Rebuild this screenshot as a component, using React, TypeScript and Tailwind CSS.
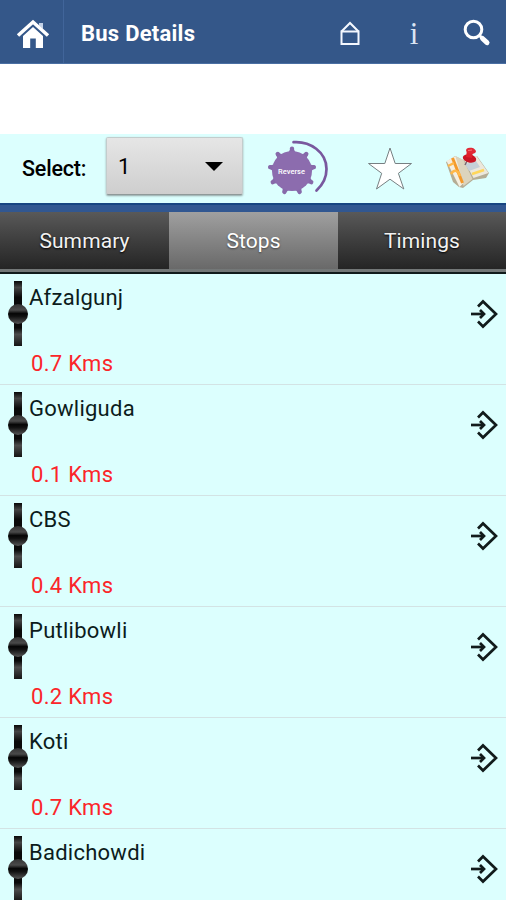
const stops = [
  { name: 'Afzalgunj', distance: '0.7 Kms' },
  { name: 'Gowliguda', distance: '0.1 Kms' },
  { name: 'CBS', distance: '0.4 Kms' },
  { name: 'Putlibowli', distance: '0.2 Kms' },
  { name: 'Koti', distance: '0.7 Kms' },
  { name: 'Badichowdi' },
];

const tabs = ['Summary', 'Stops', 'Timings'];

function HomeIcon() {
  return (
    <svg width="34" height="30" viewBox="0 0 34 30" className="shrink-0">
      <path d="M23 4h4v6l-4-3.500z" fill="#c3d2e8" />
      <path d="M2 16.500 17 3l15 13.500" fill="none" stroke="#fff" strokeWidth="3.500" />
      <path d="M7 17 17 8l10 9v12h-7.200V19.500h-5.600V29H7z" fill="#fff" />
    </svg>
  );
}

function HouseOutlineIcon() {
  return (
    <svg width="22" height="25" viewBox="0 0 22 25" fill="none" stroke="#f4f8ff" strokeWidth="2">
      <path d="M2.500 10.500h17v12.500h-17z" />
      <path d="M2.500 10.500 11 2l8.500 8.500" />
    </svg>
  );
}

function SearchIcon() {
  return (
    <svg width="28" height="28" viewBox="0 0 28 28" fill="none" stroke="#fff">
      <circle cx="10.500" cy="10.500" r="8.300" strokeWidth="3" />
      <path d="m16.500 16.500 3 3" strokeWidth="3" />
      <path d="m19.500 19.500 4.500 4.200" strokeWidth="5" strokeLinecap="round" />
    </svg>
  );
}

function ReverseIcon() {
  const teeth = [0, 40, 80, 120, 160, 200, 240, 280, 320];
  return (
    <svg width="64" height="60" viewBox="0 0 64 60">
      {teeth.map((angle) => (
        <g key={angle} transform={`rotate(${angle} 26 32)`} fill="#8769aa">
          <path d="M22 15 24.500 9h3l2.500 6z" />
          <circle cx="26" cy="9.800" r="2.200" />
        </g>
      ))}
      <circle cx="26" cy="32" r="20" fill="#8c6cae" />
      <path d="M27.500 3.200C44 2 60.500 13 60.500 30c0 9-4 16-10 21.500" fill="none" stroke="#79589e" strokeWidth="2.700" strokeLinecap="round" />
      <text x="25.500" y="34.500" textAnchor="middle" fontSize="7.500" fontWeight="500" fill="#fff" fontFamily="Roboto, sans-serif">
        Reverse
      </text>
    </svg>
  );
}

function StarIcon() {
  return (
    <svg width="48" height="46" viewBox="0 0 48 46">
      <path
        d="M24 2 29.200 17.500H45.500L32.400 27.300 37.800 43 24 33.200 10.500 43l5.200-15.700L2.500 17.500h16.300z"
        fill="#fff"
        stroke="#777f82"
        strokeWidth="1"
      />
    </svg>
  );
}

function MapIcon() {
  return (
    <svg width="46" height="44" viewBox="0 0 46 44">
      <path d="m1 15 9-6 8 4 14-4 12 17-3 5-13 2-10 8-4-1-6-5z" fill="#b5ad95" />
      <path d="m1.500 14 9-5 10 25-6 6z" fill="#f5eee0" />
      <path d="m10.500 9 8 4 9 19-9 7z" fill="#dcd4bd" />
      <path d="m18.500 12 13-3 12 17-15 5z" fill="#ece8dc" />
      <path d="m7.500 11 10 25" stroke="#f39a2c" strokeWidth="3" />
      <path d="m3 19 6-3m-3 11c3-5 7-4 9 2" fill="none" stroke="#ffb849" strokeWidth="2.500" />
      <path d="m27 27 12-4" stroke="#ffd75a" strokeWidth="2.500" />
      <path d="m20 17 11-3 4 6-11 4z" fill="#c6d0d8" />
      <path d="m22 14-2 4" stroke="#7a6872" strokeWidth="1.500" />
      <ellipse cx="24.500" cy="11.500" rx="6.800" ry="4" transform="rotate(12 24.500 11.500)" fill="#c91524" />
      <path d="m22 3 6 1-1 7-6-1z" fill="#df202c" />
      <ellipse cx="26" cy="3.800" rx="5" ry="3" transform="rotate(12 26 3.800)" fill="#e12936" />
      <path d="m23 3.500 4-.5" stroke="#ff7275" strokeWidth="1.200" />
    </svg>
  );
}

function StopMarker() {
  return (
    <svg width="20" height="66" viewBox="0 0 20 66" className="ml-2 mt-[7px] shrink-0">
      <defs>
        <linearGradient id="rail" x1="0" y1="0" x2="0" y2="1">
          <stop offset="0" stopColor="#080808" />
          <stop offset=".1" stopColor="#444" />
          <stop offset=".25" stopColor="#0a0a0a" />
          <stop offset=".72" stopColor="#0a0a0a" />
          <stop offset=".82" stopColor="#4c4c4c" />
          <stop offset="1" stopColor="#151515" />
        </linearGradient>
        <linearGradient id="knob" x1="0" y1="0" x2="0" y2="1">
          <stop offset="0" stopColor="#333" />
          <stop offset=".3" stopColor="#4a4a4a" />
          <stop offset=".48" stopColor="#050505" />
          <stop offset=".62" stopColor="#111" />
          <stop offset="1" stopColor="#555" />
        </linearGradient>
      </defs>
      <rect x="6" y="0" width="8" height="65" fill="url(#rail)" />
      <circle cx="10" cy="33" r="10" fill="url(#knob)" />
    </svg>
  );
}

function EnterIcon() {
  return (
    <svg width="30" height="32" viewBox="0 0 30 32" fill="none" stroke="#111b1b" strokeWidth="2.700">
      <path d="m9 8.500 5-5L27 16 14 28.500l-5-5" />
      <path d="M2 16h12" />
      <path d="m11 12 4 4-4 4" />
    </svg>
  );
}

export default function App() {
  return (
    <div className="flex h-[900px] w-[506px] flex-col overflow-hidden bg-[#dcfffe] font-['Roboto',sans-serif] text-black">
      <header className="flex h-16 shrink-0 items-center border-b border-[#4a6fa3] bg-[#345789] text-white">
        <div className="flex h-full w-16 items-center justify-center border-r border-[#41659a] pl-[3px] pt-1">
          <HomeIcon />
        </div>
        <h1 className="ml-[17px] flex-1 pt-[3px] text-[22px] font-bold tracking-[0.25px]">Bus Details</h1>
        <div className="flex items-center pt-[3px]">
          <HouseOutlineIcon />
          <span className="ml-[45px] w-4 text-center font-['Liberation_Serif',serif] text-[31px] leading-none text-[#dbe5f3]">i</span>
          <span className="ml-[41px] mr-[15px]">
            <SearchIcon />
          </span>
        </div>
      </header>

      <div className="h-[70px] shrink-0 bg-white" />

      <section className="flex h-[69px] shrink-0 items-start">
        <span className="ml-[22px] mt-[19px] w-[84px] text-[21.500px] font-medium leading-8 tracking-[-0.2px]">Select:</span>
        <button className="mt-[3px] flex h-[58px] w-[137px] items-center justify-between rounded-[2px] border border-[#c3cccc] border-b-[#8f9999] bg-linear-to-b from-[#e6e6e6] to-[#cecece] pl-[11px] pr-[19px] text-[22px] shadow-[0_1px_2px_#91a3a3]">
          <span>1</span>
          <svg width="18" height="9" viewBox="0 0 18 9">
            <path d="M0 0h18L9 9z" />
          </svg>
        </button>
        <span className="ml-[23px] mt-[5px]">
          <ReverseIcon />
        </span>
        <span className="ml-[36px] mt-[12px]">
          <StarIcon />
        </span>
        <span className="ml-[31px] mt-[13px]">
          <MapIcon />
        </span>
      </section>

      <div className="h-[9px] shrink-0 border-t-2 border-[#174582] bg-[#315791]" />

      <nav className="grid h-[62px] shrink-0 grid-cols-[169px_169px_168px] border-b-2 border-[#111b1b] bg-[#737777] pb-[3px]">
        {tabs.map((tab) => (
          <button
            key={tab}
            className={
              tab === 'Stops'
                ? 'bg-linear-to-b from-[#a0a0a0] to-[#696969] pt-0.5 text-[21px] tracking-[0.1px] text-white [text-shadow:0_1px_2px_#444]'
                : 'bg-linear-to-b from-[#595959] to-[#252525] pt-0.5 text-[21px] tracking-[0.1px] text-[#f2f2f2] [text-shadow:0_1px_2px_#000]'
            }
          >
            {tab}
          </button>
        ))}
      </nav>

      <main>
        {stops.map((stop) => (
          <div key={stop.name} className="flex h-[111px] border-b border-[#d3e3e4]">
            <StopMarker />
            <div className="flex-1 pt-2">
              <p className="ml-px text-[22px] leading-8 tracking-[0.25px] text-[#0c1c1c]">{stop.name}</p>
              {stop.distance && (
                <p className="ml-[3px] mt-[34px] text-[22px] leading-8 tracking-[0.3px] text-[#fb2529]">{stop.distance}</p>
              )}
            </div>
            <div className="mr-[7px] mt-6">
              <EnterIcon />
            </div>
          </div>
        ))}
      </main>
    </div>
  );
}
